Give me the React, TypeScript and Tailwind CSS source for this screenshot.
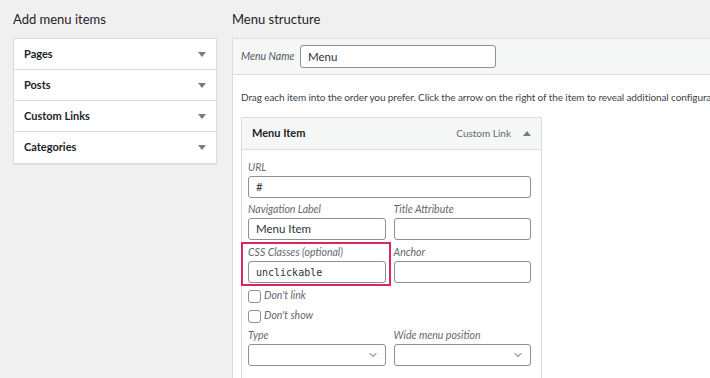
import { ChevronDown } from "lucide-react";

const font = { fontFamily: 'Lato, "Open Sans", sans-serif' };

function Caret({ up = false }: { up?: boolean }) {
  return (
    <svg width="8" height="5" viewBox="0 0 8 5" className="text-[#787c82]">
      <path d={up ? "M0 5 L4 0 L8 5 Z" : "M0 0 L8 0 L4 5 Z"} fill="currentColor" />
    </svg>
  );
}

function Label({ children }: { children: React.ReactNode }) {
  return <div className="text-[10.5px] italic text-[#646970] leading-[12px] mb-[3px]">{children}</div>;
}

function Input({ value = "", mono = false }: { value?: string; mono?: boolean }) {
  return (
    <div
      className={`h-[22px] w-full rounded-[3px] border border-[#8c8f94] bg-white px-[7px] flex items-center text-[#2c3338] ${
        mono ? "text-[10px]" : "text-[11.5px]"
      }`}
      style={mono ? { fontFamily: '"DejaVu Sans Mono", monospace' } : undefined}
    >
      {value}
    </div>
  );
}

function Select() {
  return (
    <div className="h-[22px] w-full rounded-[3px] border border-[#8c8f94] bg-white flex items-center justify-end pr-[6px]">
      <ChevronDown size={12} strokeWidth={2} className="text-[#50575e]" />
    </div>
  );
}

function Check({ label }: { label: string }) {
  return (
    <div className="flex items-center gap-[3px] h-[20px]">
      <div className="w-[13px] h-[13px] rounded-[3px] border border-[#8c8f94] bg-white" />
      <span className="text-[10.5px] italic text-[#646970]">{label}</span>
    </div>
  );
}

export default function App() {
  const sections = ["Pages", "Posts", "Custom Links", "Categories"];

  return (
    <div className="w-[710px] h-[378px] bg-[#f0f0f1] overflow-hidden flex text-[#1d2327]" style={font}>
      {/* Left column */}
      <div className="w-[204px] ml-[13px] shrink-0">
        <h2 className="text-[13px] leading-[18px] pt-[10px] h-[38px] text-[#1d2327]">Add menu items</h2>
        <div className="bg-white border border-[#dcdcde] shadow-[0_1px_1px_rgba(0,0,0,0.06)]">
          {sections.map((s, i) => (
            <div
              key={s}
              className={`h-[31px] flex items-center justify-between pl-[10px] pr-[10px] ${
                i < sections.length - 1 ? "border-b border-[#dcdcde]" : ""
              }`}
            >
              <span className="text-[11px] font-bold text-[#1d2327]">{s}</span>
              <Caret />
            </div>
          ))}
        </div>
      </div>

      {/* Right column */}
      <div className="ml-[15px] flex-1 min-w-0">
        <h2 className="text-[13px] leading-[18px] pt-[10px] h-[38px] text-[#1d2327]">Menu structure</h2>
        <div className="w-[520px] h-[400px] border-l border-t border-[#dcdcde] bg-white">
          <div className="h-[36px] bg-[#f6f7f7] border-b border-[#dcdcde] flex items-center pl-[8px]">
            <span className="text-[10.5px] italic text-[#50575e] w-[59px]">Menu Name</span>
            <div className="w-[196px] h-[23px] rounded-[3px] border border-[#8c8f94] bg-white flex items-center px-[7px] text-[11.5px] text-[#2c3338]">
              Menu
            </div>
          </div>
          <div className="pl-[8px] pt-[15px]">
            <p className="text-[10px] leading-[14px] tracking-[-0.1px] text-[#3c434a] whitespace-nowrap">
              Drag each item into the order you prefer. Click the arrow on the right of the item to reveal additional configuration options.
            </p>
            <div className="mt-[13px] w-[301px] border border-[#dcdcde] bg-white">
              <div className="h-[32px] bg-[#f6f7f7] border-b border-[#dcdcde] flex items-center justify-between pl-[10px] pr-[10px]">
                <span className="text-[11px] font-bold text-[#1d2327]">Menu Item</span>
                <div className="flex items-center gap-[12px]">
                  <span className="text-[10px] text-[#646970]">Custom Link</span>
                  <Caret up />
                </div>
              </div>
              <div className="pl-[6px] pr-[10px] pt-[11px]">
                <Label>URL</Label>
                <Input value="#" />
                <div className="mt-[5px] grid grid-cols-2 gap-[8px]">
                  <div>
                    <Label>Navigation Label</Label>
                    <Input value="Menu Item" />
                  </div>
                  <div>
                    <Label>Title Attribute</Label>
                    <Input />
                  </div>
                </div>
                <div className="mt-[6px] grid grid-cols-2 gap-[8px]">
                  <div className="relative">
                    <div className="absolute -left-[7px] -top-[4px] -right-[5px] -bottom-[3px] border-2 border-[#e0245e]" />
                    <Label>CSS Classes (optional)</Label>
                    <Input value="unclickable" mono />
                  </div>
                  <div>
                    <Label>Anchor</Label>
                    <Input />
                  </div>
                </div>
                <div className="mt-[3px]">
                  <Check label="Don't link" />
                  <Check label="Don't show" />
                </div>
                <div className="mt-[3px] grid grid-cols-2 gap-[8px]">
                  <div>
                    <Label>Type</Label>
                    <Select />
                  </div>
                  <div>
                    <Label>Wide menu position</Label>
                    <Select />
                  </div>
                </div>
                <div className="h-[40px]" />
              </div>
            </div>
          </div>
        </div>
      </div>
    </div>
  );
}
